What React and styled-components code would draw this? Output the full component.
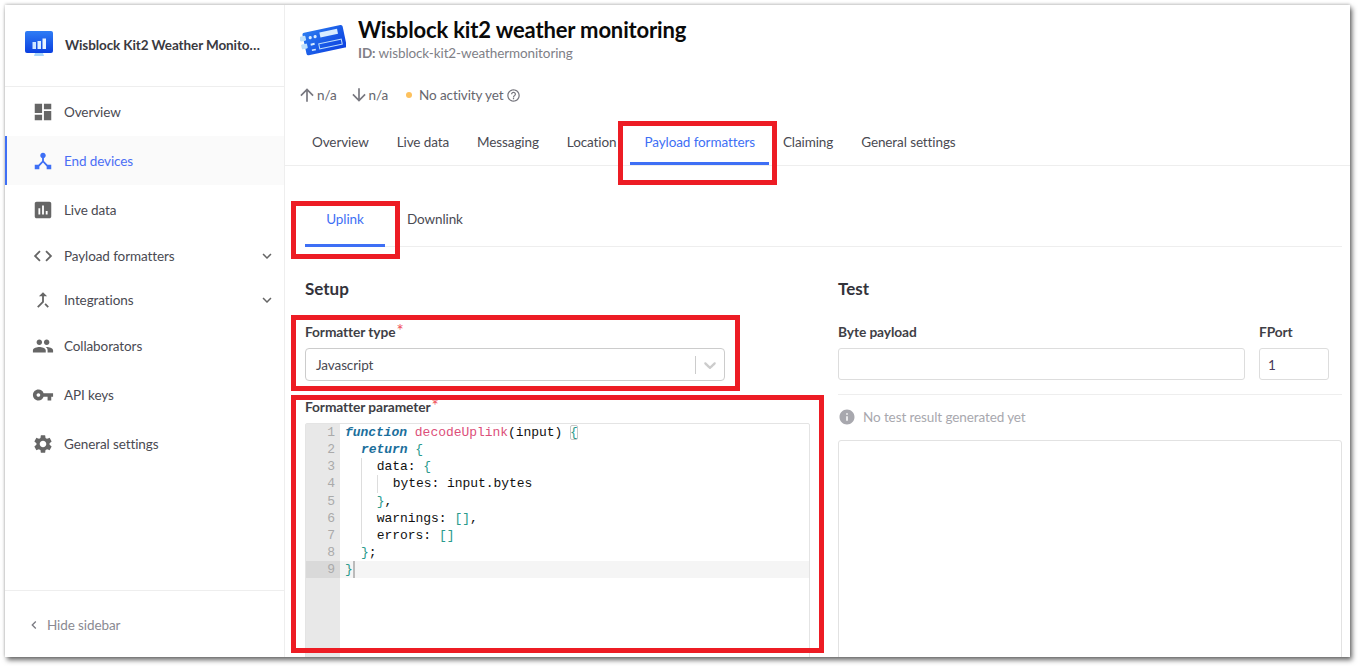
import React from "react";
import styled, { createGlobalStyle } from "styled-components";
import {
  MdDashboard,
  MdDeviceHub,
  MdAssessment,
  MdCode,
  MdCallMerge,
  MdGroup,
  MdVpnKey,
  MdSettings,
  MdKeyboardArrowDown,
  MdKeyboardArrowLeft,
  MdArrowUpward,
  MdArrowDownward,
  MdHelpOutline,
  MdInfo,
} from "react-icons/md";

const GlobalStyle = createGlobalStyle`
  html, body {
    margin: 0;
    padding: 0;
    background: #fff;
    font-family: "Lato", "Liberation Sans", sans-serif;
    font-size: 13.5px;
    letter-spacing: -0.1px;
    color: #3f3f46;
    overflow: hidden;
  }
  * { box-sizing: border-box; }
`;

const menu = [
  { label: "Overview", icon: MdDashboard, height: 49 },
  { label: "End devices", icon: MdDeviceHub, height: 49, active: true },
  { label: "Live data", icon: MdAssessment, height: 49 },
  { label: "Payload formatters", icon: MdCode, height: 44, caret: true },
  { label: "Integrations", icon: MdCallMerge, height: 44, caret: true },
  { label: "Collaborators", icon: MdGroup, height: 48 },
  { label: "API keys", icon: MdVpnKey, height: 49 },
  { label: "General settings", icon: MdSettings, height: 49 },
];

const tabs = [
  "Overview",
  "Live data",
  "Messaging",
  "Location",
  "Payload formatters",
  "Claiming",
  "General settings",
];

const Frame = styled.div`
  position: relative;
  display: flex;
  width: 1345px;
  height: 652px;
  margin: 5px 0 0 5px;
  background: #fff;
  overflow: hidden;
`;

const Shadow = styled.div`
  position: fixed;
  left: 5px;
  top: 5px;
  width: 1345px;
  height: 652px;
  box-shadow: 2px 3px 5px rgba(0, 0, 0, 0.6), 0 -1px 3px rgba(0, 0, 0, 0.2);
  pointer-events: none;
`;

const Sidebar = styled.aside`
  display: flex;
  flex-direction: column;
  flex: 0 0 280px;
  border-right: 1px solid #eeeeee;
`;

const AppHead = styled.div`
  display: flex;
  align-items: center;
  gap: 12px;
  height: 82px;
  padding: 0 20px 2px;
  border-bottom: 1px solid #eeeeee;
`;

const AppName = styled.div`
  font-weight: 700;
  color: #3a3a3f;
  white-space: nowrap;
`;

const Nav = styled.nav`
  flex: 1;
`;

const NavItem = styled.div`
  display: flex;
  align-items: center;
  gap: 10px;
  height: ${(p) => p.$height}px;
  padding: 0 8px 0 ${(p) => (p.$active ? "25px" : "27px")};
  color: ${(p) => (p.$active ? "#4b6ef5" : "#4a4a52")};
  background: ${(p) => (p.$active ? "#fafafa" : "transparent")};
  border-left: ${(p) => (p.$active ? "2px solid #3e6ff5" : "none")};
  svg {
    flex: none;
    color: ${(p) => (p.$active ? "#3e6ff5" : "#666")};
  }
`;

const NavLabel = styled.span`
  flex: 1;
`;

const SideFoot = styled.div`
  display: flex;
  align-items: center;
  gap: 5px;
  height: 67px;
  padding: 2px 0 0 21px;
  border-top: 1px solid #eeeeee;
  color: #8a8a92;
  svg {
    color: #7a7a82;
  }
`;

const Main = styled.main`
  flex: 1;
  min-width: 0;
`;

const PageHead = styled.header`
  height: 161px;
  padding-top: 12px;
  border-bottom: 1px solid #eeeeee;
`;

const TitleRow = styled.div`
  display: flex;
  align-items: center;
  gap: 12px;
  height: 46px;
  padding-left: 15px;
`;

const Title = styled.h1`
  margin: 0;
  font-size: 22px;
  line-height: 26px;
  letter-spacing: -0.15px;
  font-weight: 700;
  color: #0a0a0a;
`;

const SubId = styled.div`
  line-height: 20px;
  color: #7f7f87;
  b {
    font-weight: 700;
  }
`;

const Stats = styled.div`
  display: flex;
  align-items: center;
  height: 22px;
  margin-top: 21px;
  padding-left: 12px;
  color: #66666e;
  svg {
    color: #77777f;
  }
`;

const Stat = styled.span`
  display: flex;
  align-items: center;
  margin-right: 12px;
`;

const Dot = styled.i`
  width: 6px;
  height: 6px;
  margin: 0 7px 0 6px;
  border-radius: 50%;
  background: #fdc15d;
`;

const HelpIcon = styled(MdHelpOutline)`
  margin-left: 3px;
`;

const TabBar = styled.div`
  display: flex;
  height: 45px;
  margin-top: 14px;
  padding-left: 13px;
`;

const Tab = styled.div`
  display: flex;
  align-items: center;
  height: 45px;
  padding: 2px ${(p) => p.$pad}px 0;
  color: ${(p) => (p.$active ? "#3e6ff5" : "#4a4a52")};
  border-bottom: 3px solid ${(p) => (p.$active ? "#3e6ff5" : "transparent")};
`;

const Body = styled.div`
  padding: 29px 8px 0 20px;
`;

const SubTabs = styled.div`
  display: flex;
  height: 52px;
  border-bottom: 1px solid #eeeeee;
`;

const SubTab = styled(Tab)`
  height: 52px;
  padding-top: 0;
  padding-bottom: 1px;
  min-width: ${(p) => p.$min}px;
  justify-content: center;
`;

const Columns = styled.div`
  display: grid;
  grid-template-columns: 505px 504px;
  column-gap: 28px;
  margin-top: 31px;
`;

const Heading = styled.h2`
  margin: 0 0 22px;
  font-size: 17px;
  line-height: 22px;
  letter-spacing: 0;
  font-weight: 700;
  color: #33333a;
`;

const Label = styled.div`
  font-size: 13.75px;
  line-height: 20px;
  font-weight: 700;
  color: #3f3f46;
  margin-bottom: 6px;
`;

const Req = styled.span`
  position: relative;
  top: 0;
  margin-left: 1px;
  font-size: 17px;
  line-height: 0;
  font-weight: 400;
  color: #f0505a;
`;

const Select = styled.div`
  display: flex;
  align-items: center;
  width: 420px;
  height: 33px;
  margin-bottom: 16px;
  padding: 0 4px 0 10px;
  border: 1px solid #cccccc;
  border-radius: 4px;
  color: #4a4a52;
`;

const SelectValue = styled.span`
  flex: 1;
`;

const SelectSep = styled.i`
  width: 1px;
  height: 18px;
  margin-right: 4px;
  background: #cccccc;
`;

const Editor = styled.div`
  display: flex;
  width: 505px;
  height: 320px;
  border: 1px solid #e4e4e4;
  border-radius: 2px 2px 0 0;
  font-family: "Liberation Mono", monospace;
  font-size: 13px;
  line-height: 17.15px;
  letter-spacing: -0.04px;
  color: #111;
`;

const Gutter = styled.div`
  flex: 0 0 34px;
  background: #e8e8e8;
  color: #aaaaaa;
  text-align: right;
`;

const GutterCell = styled.div`
  height: 17.15px;
  padding-right: 5px;
  background: ${(p) => (p.$active ? "#d9d9d9" : "transparent")};
`;

const Code = styled.div`
  flex: 1;
`;

const Line = styled.div`
  height: 17.15px;
  padding-left: 5px;
  white-space: pre;
  background: ${(p) => (p.$active ? "#f5f5f5" : "transparent")};
`;

const Indent = styled.span`
  display: inline-block;
  vertical-align: top;
  width: 15.9px;
  height: 17.15px;
  box-shadow: ${(p) => (p.$guide ? "inset 1px 0 0 #dddddd" : "none")};
`;

const Keyword = styled.span`
  color: #1b6f9c;
  font-style: italic;
  font-weight: 700;
`;

const Fn = styled.span`
  color: #dc4f7a;
`;

const Bracket = styled.span`
  color: #2a9a8c;
  ${(p) => p.$match && "outline: 1px solid #c8c8c8; outline-offset: -1px; border-radius: 2px;"}
`;

const Cursor = styled.i`
  display: inline-block;
  vertical-align: top;
  width: 2px;
  height: 17px;
  background: #bbbbbb;
`;

const TestFields = styled.div`
  display: grid;
  grid-template-columns: 407px 70px;
  column-gap: 14px;
  padding-bottom: 14px;
  border-bottom: 1px solid #eeeeee;
`;

const Input = styled.div`
  height: 32px;
  padding: 0 8px;
  line-height: 32px;
  border: 1px solid #dddddd;
  border-radius: 3px;
  color: #4a3a5a;
`;

const Empty = styled.div`
  display: flex;
  align-items: center;
  gap: 7px;
  height: 22px;
  margin-top: 11px;
  color: #a8a8ae;
  svg {
    color: #a8a8ae;
  }
`;

const Result = styled.div`
  height: 300px;
  margin-top: 12px;
  border: 1px solid #e2e2e2;
  border-radius: 3px;
`;

const Callout = styled.div`
  position: absolute;
  left: ${(p) => p.$x}px;
  top: ${(p) => p.$y}px;
  width: ${(p) => p.$w}px;
  height: ${(p) => p.$h}px;
  border: 5px solid #ed1c24;
  pointer-events: none;
`;

const MonitorIcon = () => (
  <svg width="28" height="28" viewBox="0 0 28 28">
    <defs>
      <linearGradient id="mon" x1="0" y1="0" x2="0" y2="1">
        <stop offset="0" stopColor="#2f7df5" />
        <stop offset="1" stopColor="#0a3fe0" />
      </linearGradient>
    </defs>
    <rect x="0" y="0" width="28" height="22" rx="2" fill="url(#mon)" />
    <path d="M10 22h8l1 3h-10z" fill="#a9d6fb" />
    <rect x="7.5" y="11" width="3.5" height="7" fill="#cfe6ff" />
    <rect x="12.5" y="10" width="3.5" height="8" fill="#dcedff" />
    <rect x="17.5" y="7.5" width="3.5" height="10.5" fill="#e9f3ff" />
  </svg>
);

const BoardIcon = () => (
  <svg width="46" height="36" viewBox="0 0 46 36">
    <defs>
      <linearGradient id="board" x1="0" y1="0" x2="1" y2="1">
        <stop offset="0" stopColor="#2b7bf0" />
        <stop offset="1" stopColor="#0b3fe0" />
      </linearGradient>
    </defs>
    <g transform="rotate(-12 23 18)">
      <rect x="4" y="7" width="41" height="23" rx="2" fill="url(#board)" />
      <rect x="0.5" y="10" width="6" height="5" rx="1" fill="#bfe0fb" />
      <rect x="0.5" y="18" width="6" height="5" rx="1" fill="#bfe0fb" />
      <circle cx="11" cy="13" r="1.6" fill="#d8ecff" />
      <circle cx="16" cy="13" r="1.6" fill="#d8ecff" />
      <rect x="21" y="10" width="18" height="5" fill="#d8ecff" />
      <rect x="10" y="19" width="4" height="2" fill="#d8ecff" />
      <rect x="18" y="21" width="23" height="5" fill="none" stroke="#bcdcfb" strokeWidth="1" />
      <rect x="10" y="25" width="4" height="1.6" fill="#d8ecff" />
    </g>
  </svg>
);

const SelectChevron = () => (
  <svg width="20" height="20" viewBox="0 0 20 20" fill="#cccccc">
    <path d="M4.516 7.548c.436-.446 1.043-.481 1.576 0L10 11.295l3.908-3.747c.533-.481 1.141-.446 1.574 0 .436.445.408 1.197 0 1.615-.406.418-4.695 4.502-4.695 4.502a1.095 1.095 0 0 1-1.576 0S4.924 9.581 4.516 9.163c-.409-.418-.436-1.17 0-1.615z" />
  </svg>
);

const App = () => (
  <>
    <GlobalStyle />
    <Frame>
      <Sidebar>
        <AppHead>
          <MonitorIcon />
          <AppName>Wisblock Kit2 Weather Monito…</AppName>
        </AppHead>
        <Nav>
          {menu.map((item) => (
            <NavItem key={item.label} $height={item.height} $active={item.active}>
              <item.icon size={22} />
              <NavLabel>{item.label}</NavLabel>
              {item.caret && <MdKeyboardArrowDown size={18} />}
            </NavItem>
          ))}
        </Nav>
        <SideFoot>
          <MdKeyboardArrowLeft size={16} />
          Hide sidebar
        </SideFoot>
      </Sidebar>
      <Main>
        <PageHead>
          <TitleRow>
            <BoardIcon />
            <div>
              <Title>Wisblock kit2 weather monitoring</Title>
              <SubId>
                <b>ID:</b> wisblock-kit2-weathermonitoring
              </SubId>
            </div>
          </TitleRow>
          <Stats>
            <Stat>
              <MdArrowUpward size={20} />
              n/a
            </Stat>
            <Stat>
              <MdArrowDownward size={20} />
              n/a
            </Stat>
            <Dot />
            No activity yet
            <HelpIcon size={15} />
          </Stats>
          <TabBar>
            {tabs.map((t) => (
              <Tab key={t} $pad={14} $active={t === "Payload formatters"}>
                {t}
              </Tab>
            ))}
          </TabBar>
        </PageHead>
        <Body>
          <SubTabs>
            <SubTab $pad={0} $min={80} $active>
              Uplink
            </SubTab>
            <SubTab $pad={22} $min={0}>
              Downlink
            </SubTab>
          </SubTabs>
          <Columns>
            <div>
              <Heading>Setup</Heading>
              <Label>
                Formatter type<Req>*</Req>
              </Label>
              <Select>
                <SelectValue>Javascript</SelectValue>
                <SelectSep />
                <SelectChevron />
              </Select>
              <Label>
                Formatter parameter<Req>*</Req>
              </Label>
              <Editor>
                <Gutter>
                  {[1, 2, 3, 4, 5, 6, 7, 8, 9].map((n) => (
                    <GutterCell key={n} $active={n === 9}>
                      {n}
                    </GutterCell>
                  ))}
                </Gutter>
                <Code>
                  <Line>
                    <Keyword>function</Keyword> <Fn>decodeUplink</Fn>(input) <Bracket $match>{"{"}</Bracket>
                  </Line>
                  <Line>
                    <Indent />
                    <Keyword>return</Keyword> <Bracket>{"{"}</Bracket>
                  </Line>
                  <Line>
                    <Indent />
                    <Indent $guide />
                    data: <Bracket>{"{"}</Bracket>
                  </Line>
                  <Line>
                    <Indent />
                    <Indent $guide />
                    <Indent $guide />
                    bytes: input.bytes
                  </Line>
                  <Line>
                    <Indent />
                    <Indent $guide />
                    <Bracket>{"}"}</Bracket>,
                  </Line>
                  <Line>
                    <Indent />
                    <Indent $guide />
                    warnings: <Bracket>[]</Bracket>,
                  </Line>
                  <Line>
                    <Indent />
                    <Indent $guide />
                    errors: <Bracket>[]</Bracket>
                  </Line>
                  <Line>
                    <Indent />
                    <Bracket>{"}"}</Bracket>;
                  </Line>
                  <Line $active>
                    <Bracket>{"}"}</Bracket>
                    <Cursor />
                  </Line>
                </Code>
              </Editor>
            </div>
            <div>
              <Heading>Test</Heading>
              <TestFields>
                <div>
                  <Label>Byte payload</Label>
                  <Input />
                </div>
                <div>
                  <Label>FPort</Label>
                  <Input>1</Input>
                </div>
              </TestFields>
              <Empty>
                <MdInfo size={18} />
                No test result generated yet
              </Empty>
              <Result />
            </div>
          </Columns>
        </Body>
      </Main>
      <Callout $x={613} $y={116} $w={159} $h={64} />
      <Callout $x={286} $y={196} $w={109} $h={58} />
      <Callout $x={286} $y={310} $w={449} $h={76} />
      <Callout $x={286} $y={390} $w={533} $h={258} />
    </Frame>
    <Shadow />
  </>
);

export default App;
